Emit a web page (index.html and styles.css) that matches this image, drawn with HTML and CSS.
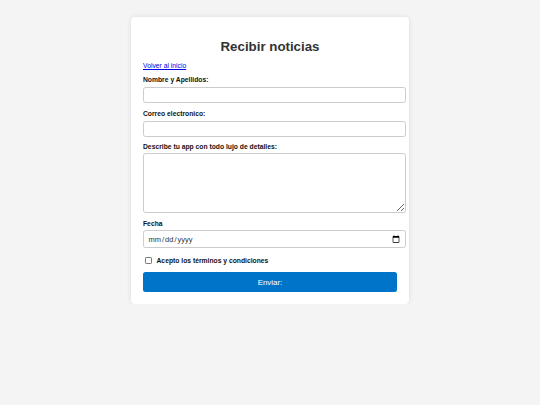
FILE: index.html
```html
<!DOCTYPE html>
<html lang="es">
<head>
<meta charset="utf-8">
<title>Recibir noticias</title>
<link rel="stylesheet" href="styles.css">
</head>
<body>
<main class="card">
  <h2 class="title">Recibir noticias</h2>
  <a class="back" href="#">Volver al inicio</a>
  <form class="form">
    <label class="label" for="nombre">Nombre y Apellidos:</label>
    <input class="field" id="nombre" type="text">
    <label class="label" for="correo">Correo electronico:</label>
    <input class="field" id="correo" type="email">
    <label class="label" for="desc">Describe tu app con todo lujo de detalles:</label>
    <textarea class="field area" id="desc"></textarea>
    <label class="label" for="fecha">Fecha</label>
    <input class="field date" id="fecha" type="date">
    <div class="check-row">
      <input class="check" id="terms" type="checkbox">
      <label class="check-label" for="terms">Acepto los términos y condiciones</label>
    </div>
    <button class="submit" type="submit">Enviar:</button>
  </form>
</main>
</body>
</html>
```

FILE: styles.css
```css
html, body {
  margin: 0;
  padding: 0;
  background: #f4f4f4;
  font-family: "Liberation Sans", Arial, sans-serif;
  color: #333;
}

.card {
  width: 254px;
  margin: 17px auto 0;
  padding: 12px 12px 12px;
  background: #fff;
  border-radius: 4px;
  box-shadow: 0 0 5px rgba(0, 0, 0, 0.1);
}

.title {
  margin: 10px 0 8px;
  font-size: 13.3px;
  line-height: 1.15;
  font-weight: bold;
  text-align: center;
  color: #333;
}

.back {
  display: block;
  font-size: 6.75px;
  line-height: 1.15;
  color: #0000ee;
  margin-bottom: 6px;
}

.form {
  display: flex;
  flex-direction: column;
  align-items: flex-start;
}

.label {
  display: block;
  font-size: 6.75px;
  line-height: 1.15;
  font-weight: bold;
  color: #111;
  margin-bottom: 3.2px;
}

.field {
  width: 100%;
  box-sizing: content-box;
  height: 14px;
  padding: 0 3.5px;
  margin: 0 0 6.6px;
  border: 1px solid #ccc;
  border-radius: 2.5px;
  background: #fff;
  font-family: "Liberation Sans", Arial, sans-serif;
  font-size: 7.5px;
  color: #222;
  outline: none;
}

.area {
  height: 56px;
  padding: 1px 3.5px;
  resize: vertical;
  margin-top: -1.5px;
  margin-bottom: 7px;
}

.date {
  height: 16.5px;
  margin-top: -0.5px;
  margin-bottom: 5px;
  color: #333;
}

.check-row {
  display: flex;
  align-items: center;
  height: 14px;
  margin-bottom: 5px;
}

.check {
  appearance: none;
  -webkit-appearance: none;
  box-sizing: border-box;
  width: 6.5px;
  height: 6.5px;
  margin: 0 5px 0 2px;
  border: 0.8px solid #777;
  border-radius: 1.2px;
  background: #fff;
}

.check-label {
  font-size: 6.75px;
  font-weight: bold;
  color: #111;
}

.submit {
  width: 100%;
  height: 19.4px;
  border: none;
  border-radius: 2.5px;
  background: #0074c8;
  color: #fff;
  font-family: "Liberation Sans", Arial, sans-serif;
  font-size: 7.9px;
  padding: 0;
}
```
